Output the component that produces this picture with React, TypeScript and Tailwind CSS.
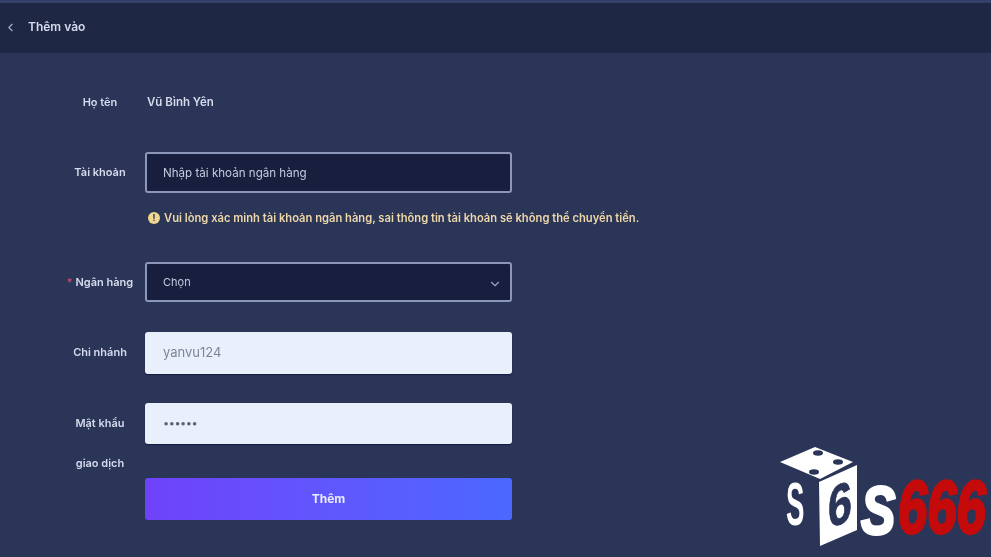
import { ChevronDown, ChevronLeft } from "lucide-react";
import type { ReactNode } from "react";

const font = { fontFamily: "Inter, 'Noto Sans', 'Liberation Sans', sans-serif" };

function Row({ label, children, className }: { label?: ReactNode; children: ReactNode; className?: string }) {
  return (
    <div className={"flex items-start " + (className || "")}>
      <div className="w-[70px] mr-[10px] text-center text-[11px] font-semibold text-[#d5dbec] shrink-0">{label}</div>
      <div className="w-[367px] shrink-0">{children}</div>
    </div>
  );
}

function Logo() {
  return (
    <svg className="absolute left-[770px] top-[437px] blur-[0.4px]" width="221" height="120" viewBox="0 0 221 120">
      <polygon points="45,10 83,25 50,42 10,25" fill="#ffffff" />
      <ellipse cx="48" cy="16" rx="5" ry="2.8" fill="#2a3558" />
      <ellipse cx="68" cy="25" rx="5" ry="2.8" fill="#2a3558" />
      <ellipse cx="44" cy="35" rx="5" ry="2.8" fill="#2a3558" />
      <polygon points="49,45 87,28 87,93 50,109" fill="#ffffff" />
      <text
        transform="translate(58,92) skewY(-22) scale(1.2,1.6)"
        fontFamily="Liberation Sans"
        fontWeight="700"
        fontSize="36"
        fill="#2a3558"
        stroke="#2a3558"
        strokeWidth="0.5"
      >
        6
      </text>
      <text
        transform="translate(16,88) scale(0.92,2.05)"
        fontFamily="Liberation Sans"
        fontWeight="700"
        fontSize="30"
        fill="#ffffff"
      >
        S
      </text>
      <text
        transform="translate(91,97) scale(1.12,1.48)"
        fontFamily="Liberation Sans"
        fontWeight="700"
        fontStyle="italic"
        fontSize="46"
        fill="#ffffff"
        stroke="#ffffff"
        strokeWidth="2"
      >
        S
      </text>
      <text
        transform="translate(128,96) scale(1.05,1.5)"
        fontFamily="Liberation Sans"
        fontWeight="700"
        fontStyle="italic"
        fontSize="50"
        fill="#c40a0a"
        stroke="#c40a0a"
        strokeWidth="2.2"
      >
        666
      </text>
    </svg>
  );
}

export default function App() {
  return (
    <div className="relative w-[991px] h-[557px] overflow-hidden bg-[#2a3558]" style={font}>
      <div className="blur-[0.6px]">
        <div className="h-[53px] bg-[#1e2744] border-t-[3px] border-[#34406a] flex items-center text-[#d5dbec]">
          <ChevronLeft size={13} strokeWidth={2} className="ml-[4px] text-[#aab3cc] -mt-[2px]" />
          <span className="ml-[11px] text-[12px] font-semibold -mt-[2px]">Thêm vào</span>
        </div>

        <div className="pl-[65px]">
          <Row label="Họ tên" className="mt-[39px] h-[20px] leading-[20px]">
            <div className="pl-[2px] text-[11.5px] font-semibold text-[#d5dbec]">Vũ Bình Yên</div>
          </Row>

          <Row label={<span className="leading-[40px]">Tài khoản</span>} className="mt-[40px]">
            <div className="h-[41px] rounded-[3px] border-2 border-[#8b96b8] bg-[#171e3e] flex items-center pl-[16px] pt-[3px] text-[11.6px] text-[#c4cbde]">
              Nhập tài khoản ngân hàng
            </div>
          </Row>

          <Row className="mt-[17px] h-[16px]">
            <div className="flex items-center gap-[4px] pl-[3px] whitespace-nowrap text-[11.2px] font-semibold text-[#eed7a8] leading-[16px]">
              <span className="w-[12px] h-[12px] rounded-full bg-[#f0d68e] text-[#2a3558] text-[9px] font-bold leading-[12px] text-center shrink-0">
                !
              </span>
              Vui lòng xác minh tài khoản ngân hàng, sai thông tin tài khoản sẽ không thể chuyển tiền.
            </div>
          </Row>

          <Row
            label={
              <span className="leading-[40px]">
                <span className="text-[#d0455f]">* </span>Ngân hàng
              </span>
            }
            className="mt-[36px]"
          >
            <div className="h-[40px] rounded-[3px] border-2 border-[#8b96b8] bg-[#171e3e] flex items-center justify-between pl-[16px] pr-[8px] text-[11px] text-[#c4cbde]">
              Chọn
              <ChevronDown size={14} className="text-[#9aa3bd] mt-[3px]" />
            </div>
          </Row>

          <Row label={<span className="leading-[40px]">Chi nhánh</span>} className="mt-[30px]">
            <div className="h-[42px] rounded-[3px] bg-[#e9f0fc] shadow-[0_1px_1px_#141b44] flex items-center pl-[18px] text-[13px] text-[#7d8597]">
              yanvu124
            </div>
          </Row>

          <Row
            label={
              <div className="h-[41px] leading-[40px]">
                Mật khẩu
                <br />
                giao dịch
              </div>
            }
            className="mt-[29px]"
          >
            <div className="h-[41px] rounded-[3px] bg-[#e9f0fc] shadow-[0_1px_1px_#141b44] flex items-center pl-[18px] text-[11px] tracking-[-0.5px] text-[#5b6270]">
              ••••••
            </div>
          </Row>

          <Row className="mt-[34px]">
            <div className="h-[42px] rounded-[3px] bg-gradient-to-r from-[#6f42fa] to-[#4a68ff] flex items-center justify-center text-[12px] font-bold text-[#e8ecff]">
              Thêm
            </div>
          </Row>
        </div>
      </div>

      <Logo />
    </div>
  );
}
